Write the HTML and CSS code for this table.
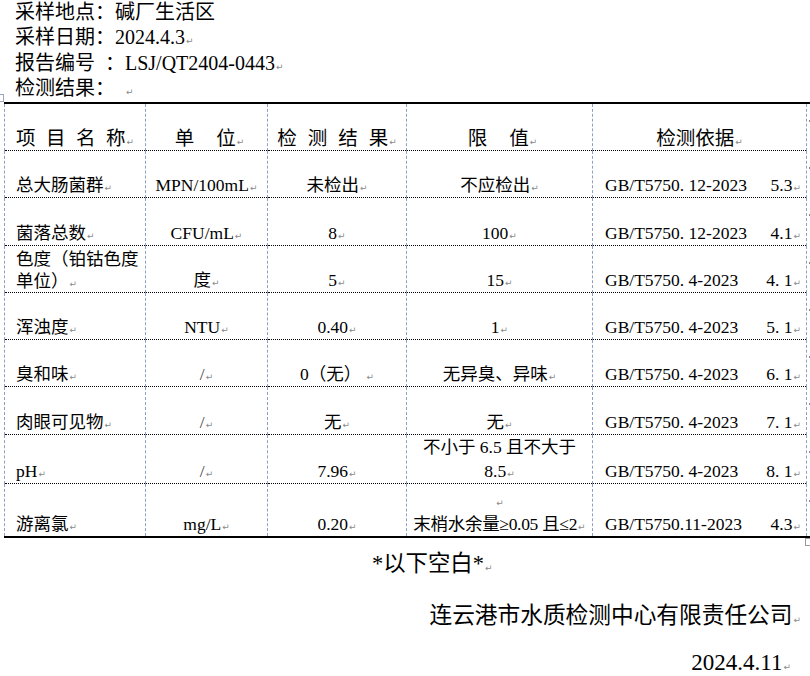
FILE: index.html
```html
<!DOCTYPE html>
<html lang="zh-CN">
<head>
<meta charset="utf-8">
<title>检测结果</title>
<link rel="stylesheet" href="styles.css">
</head>
<body>
<div class="page">
  <div class="info">
    <p>采样地点：碱厂生活区</p>
    <p>采样日期：2024.4.3<span class="pm">↵</span></p>
    <p>报告编号&ensp;：LSJ/QT2404-0443<span class="pm">↵</span></p>
    <p>检测结果：  <span class="pm">↵</span></p>
  </div>

  <span class="move-handle"></span>

  <table class="report">
    <colgroup>
      <col class="c1"><col class="c2"><col class="c3"><col class="c4"><col class="c5"><col class="c6">
    </colgroup>
    <tr class="head">
      <td class="name"><span class="sp-a">项目名</span>称<span class="pm">↵</span></td>
      <td class="shift"><span class="sp-b">单</span>位<span class="pm">↵</span></td>
      <td><span class="sp-c">检测结</span>果<span class="pm">↵</span></td>
      <td class="shift"><span class="sp-b">限</span>值<span class="pm">↵</span></td>
      <td>检测依据<span class="pm">↵</span></td>
      <td class="mark"><svg class="rm" width="8" height="8" viewBox="0 0 8 8"><path d="M7 1v4H2M3.5 3.5 2 5l1.5 1.5" fill="none" stroke="#8a8a8a" stroke-width="1"/></svg></td>
    </tr>
    <tr class="h47">
      <td class="name">总大肠菌群<span class="pm">↵</span></td>
      <td>MPN/100mL<span class="pm">↵</span></td>
      <td>未检出<span class="pm">↵</span></td>
      <td>不应检出<span class="pm">↵</span></td>
      <td class="std"><div class="std-in"><span>GB/T5750. 12-2023</span><span>5.3<span class="pm">↵</span></span></div></td>
      <td class="mark"><svg class="rm" width="8" height="8" viewBox="0 0 8 8"><path d="M7 1v4H2M3.5 3.5 2 5l1.5 1.5" fill="none" stroke="#8a8a8a" stroke-width="1"/></svg></td>
    </tr>
    <tr class="h48">
      <td class="name">菌落总数<span class="pm">↵</span></td>
      <td>CFU/mL<span class="pm">↵</span></td>
      <td>8<span class="pm">↵</span></td>
      <td>100<span class="pm">↵</span></td>
      <td class="std"><div class="std-in"><span>GB/T5750. 12-2023</span><span>4.1<span class="pm">↵</span></span></div></td>
      <td class="mark"><svg class="rm" width="8" height="8" viewBox="0 0 8 8"><path d="M7 1v4H2M3.5 3.5 2 5l1.5 1.5" fill="none" stroke="#8a8a8a" stroke-width="1"/></svg></td>
    </tr>
    <tr class="h47">
      <td class="name two">色度（铂钴色度<br>单位）<span class="pm">↵</span></td>
      <td>度<span class="pm">↵</span></td>
      <td>5<span class="pm">↵</span></td>
      <td>15<span class="pm">↵</span></td>
      <td class="std"><div class="std-in"><span>GB/T5750. 4-2023</span><span>4. 1<span class="pm">↵</span></span></div></td>
      <td class="mark"><svg class="rm" width="8" height="8" viewBox="0 0 8 8"><path d="M7 1v4H2M3.5 3.5 2 5l1.5 1.5" fill="none" stroke="#8a8a8a" stroke-width="1"/></svg></td>
    </tr>
    <tr class="h47">
      <td class="name">浑浊度<span class="pm">↵</span></td>
      <td>NTU<span class="pm">↵</span></td>
      <td>0.40<span class="pm">↵</span></td>
      <td>1<span class="pm">↵</span></td>
      <td class="std"><div class="std-in"><span>GB/T5750. 4-2023</span><span>5. 1<span class="pm">↵</span></span></div></td>
      <td class="mark"><svg class="rm" width="8" height="8" viewBox="0 0 8 8"><path d="M7 1v4H2M3.5 3.5 2 5l1.5 1.5" fill="none" stroke="#8a8a8a" stroke-width="1"/></svg></td>
    </tr>
    <tr class="h47">
      <td class="name">臭和味<span class="pm">↵</span></td>
      <td class="slash">/<span class="pm">↵</span></td>
      <td>0（无） <span class="pm">↵</span></td>
      <td>无异臭、异味<span class="pm">↵</span></td>
      <td class="std"><div class="std-in"><span>GB/T5750. 4-2023</span><span>6. 1<span class="pm">↵</span></span></div></td>
      <td class="mark"><svg class="rm" width="8" height="8" viewBox="0 0 8 8"><path d="M7 1v4H2M3.5 3.5 2 5l1.5 1.5" fill="none" stroke="#8a8a8a" stroke-width="1"/></svg></td>
    </tr>
    <tr class="h48">
      <td class="name">肉眼可见物<span class="pm">↵</span></td>
      <td class="slash">/<span class="pm">↵</span></td>
      <td>无<span class="pm">↵</span></td>
      <td>无<span class="pm">↵</span></td>
      <td class="std"><div class="std-in"><span>GB/T5750. 4-2023</span><span>7. 1<span class="pm">↵</span></span></div></td>
      <td class="mark"><svg class="rm" width="8" height="8" viewBox="0 0 8 8"><path d="M7 1v4H2M3.5 3.5 2 5l1.5 1.5" fill="none" stroke="#8a8a8a" stroke-width="1"/></svg></td>
    </tr>
    <tr class="h48">
      <td class="name">pH<span class="pm">↵</span></td>
      <td class="slash">/<span class="pm">↵</span></td>
      <td>7.96<span class="pm">↵</span></td>
      <td class="tall">不小于 6.5 且不大于<br>8.5<span class="pm">↵</span></td>
      <td class="std"><div class="std-in"><span>GB/T5750. 4-2023</span><span>8. 1<span class="pm">↵</span></span></div></td>
      <td class="mark"><svg class="rm" width="8" height="8" viewBox="0 0 8 8"><path d="M7 1v4H2M3.5 3.5 2 5l1.5 1.5" fill="none" stroke="#8a8a8a" stroke-width="1"/></svg></td>
    </tr>
    <tr class="h54 last">
      <td class="name">游离氯<span class="pm">↵</span></td>
      <td>mg/L<span class="pm">↵</span></td>
      <td>0.20<span class="pm">↵</span></td>
      <td class="tall narrow"><span class="pm">↵</span><br>末梢水余量≥0.05 且≤2<span class="pm">↵</span></td>
      <td class="std"><div class="std-in"><span>GB/T5750.11-2023</span><span>4.3<span class="pm">↵</span></span></div></td>
      <td class="mark"><svg class="rm" width="8" height="8" viewBox="0 0 8 8"><path d="M7 1v4H2M3.5 3.5 2 5l1.5 1.5" fill="none" stroke="#8a8a8a" stroke-width="1"/></svg></td>
    </tr>
  </table>

  <span class="size-handle"></span>

  <p class="blank">*以下空白*<span class="pm">↵</span></p>
  <p class="company">连云港市水质检测中心有限责任公司<span class="pm">↵</span></p>
  <p class="date">2024.4.11<span class="pm">↵</span></p>
</div>
</body>
</html>
```

FILE: styles.css
```css
html, body {
  margin: 0;
  padding: 0;
  background: #fff;
}

body {
  width: 810px;
  height: 676px;
  overflow: hidden;
  font-family: "Liberation Serif", "Noto Sans CJK SC", serif;
  color: #000;
}

.page {
  position: relative;
  width: 810px;
  height: 676px;
}

p {
  margin: 0;
}

.info {
  padding-left: 15px;
  font-size: 20px;
  line-height: 25.3px;
}

.info p {
  height: 25.3px;
  white-space: pre;
}

.pm {
  font-family: "DejaVu Sans", sans-serif;
  font-size: 9px;
  line-height: 1;
  color: #8a8a8a;
  letter-spacing: 0;
  margin-left: 1px;
}

.report {
  margin: 1px 0 0 4px;
  border-collapse: collapse;
  table-layout: fixed;
  width: 808px;
}

.c1 { width: 141px; }
.c2 { width: 122px; }
.c3 { width: 139px; }
.c4 { width: 186px; }
.c5 { width: 214px; }
.c6 { width: 6px; }

.report td {
  border-left: 1px dashed #8da0c2;
  border-right: 1px dashed #8da0c2;
  border-top: 1px dotted #000;
  padding: 0 0 1px;
  vertical-align: bottom;
  text-align: center;
  font-size: 17.5px;
  line-height: 22px;
  white-space: nowrap;
}

.report tr.head td {
  border-top: 2px solid #000;
  font-size: 19.5px;
  height: 46px;
  padding-bottom: 0;
}

.report tr.head td.shift {
  padding-left: 6px;
}

.report tr.last td {
  border-bottom: 2px solid #000;
}

.h47 td { height: 45px; }
.h48 td { height: 46px; }
.h54 td { height: 51px; }

.report td.name {
  text-align: left;
  padding-left: 11px;
}

.report td.two {
  line-height: 21.5px;
  padding-bottom: 0;
}

.report td.tall {
  line-height: 24px;
  padding-bottom: 0;
}

.report td.narrow {
  letter-spacing: -0.3px;
}

.report td.slash {
  color: #444;
}

.sp-a { letter-spacing: 10.5px; }
.sp-b { letter-spacing: 22px; }
.sp-c { letter-spacing: 11px; }

.std-in {
  display: flex;
  justify-content: space-between;
  padding: 0 5px 0 12px;
}

.report td.mark {
  border: none;
  border-left: 1px dashed #8da0c2;
  vertical-align: top;
  text-align: left;
  padding: 0;
  overflow: visible;
}

.rm {
  display: block;
  margin-top: 12px;
  margin-left: 0;
}

.move-handle {
  position: absolute;
  left: -4px;
  top: 94px;
  width: 6px;
  height: 6px;
  border: 1px solid #9aa6bd;
  background: #fff;
}

.size-handle {
  position: absolute;
  left: 805px;
  top: 538px;
  width: 6px;
  height: 6px;
  border: 1px solid #9a9a9a;
  background: #fff;
}

.blank {
  margin-top: 11px;
  padding-left: 372px;
  font-size: 22.4px;
  line-height: 30px;
}

.company {
  margin-top: 22px;
  text-align: right;
  padding-right: 9px;
  font-size: 22.7px;
  line-height: 30px;
}

.date {
  margin-top: 21px;
  text-align: right;
  padding-right: 19px;
  font-size: 23px;
  line-height: 22px;
}
```
